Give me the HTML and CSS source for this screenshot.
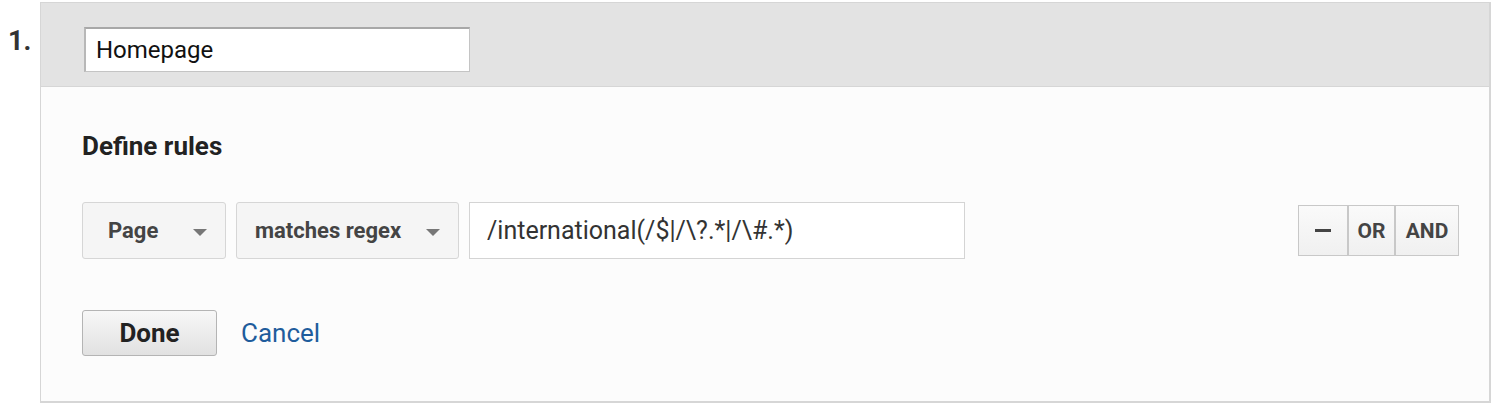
FILE: index.html
```html
<!DOCTYPE html>
<html>
<head>
    <title>Segment step</title>
    <link rel="stylesheet" href="styles.css">
</head>
<body>
    <div class="step">
        <div class="step-num">1.</div>
        <div class="step-box">
            <div class="step-head">
                <input class="name-input" type="text" value="Homepage">
            </div>
            <div class="step-body">
                <h3 class="rules-title">Define rules</h3>
                <div class="rule-row">
                    <div class="select sel-page">Page <span class="caret"></span></div>
                    <div class="select sel-match">matches regex <span class="caret"></span></div>
                    <input class="rule-input" type="text" value="/international(/$|/\?.*|/\#.*)">
                    <div class="btn-group">
                        <div class="seg seg-minus"><span class="minus"></span></div>
                        <div class="seg seg-or">OR</div>
                        <div class="seg seg-and">AND</div>
                    </div>
                </div>
                <div class="actions">
                    <button class="btn-done">Done</button>
                    <a class="cancel" href="#">Cancel</a>
                </div>
            </div>
        </div>
    </div>
</body>
</html>
```

FILE: styles.css
```css
body {
    margin: 0;
    font-family: Roboto, "Liberation Sans", Arial, sans-serif;
    background: #fff;
    color: #222;
}
.step {
    display: flex;
    padding-top: 2px;
}
.step-num {
    width: 32px;
    padding-left: 8px;
    padding-top: 23px;
    font-size: 27px;
    font-weight: bold;
    color: #333;
}
.step-box {
    width: 1448px;
    border: 1px solid #d6d6d6;
    border-width: 1px 2px 2px 1px;
    background: #fcfcfc;
}
.step-head {
    height: 84px;
    box-sizing: border-box;
    background: #e3e3e3;
    border-bottom: 1px solid #d6d6d6;
    padding: 24px 0 0 43px;
}
.name-input {
    width: 386px;
    height: 45px;
    box-sizing: border-box;
    border: 1px solid #c4c4c4;
    border-top: 2px solid #a8a8a8;
    border-left: 2px solid #b8b8b8;
    padding: 0 10px;
    font-family: inherit;
    font-size: 24px;
    color: #111;
    background: #fff;
    outline: none;
}
.step-body {
    padding: 0 0 0 41px;
}
.rules-title {
    margin: 0;
    padding-top: 44px;
    font-size: 26px;
    font-weight: bold;
    color: #222;
}
.rule-row {
    display: flex;
    align-items: center;
    margin-top: 41px;
}
.select {
    height: 57px;
    box-sizing: border-box;
    border: 1px solid #d6d6d6;
    border-radius: 3px;
    background: #f5f5f5;
    display: flex;
    align-items: center;
    font-size: 22px;
    font-weight: bold;
    color: #444;
    margin-right: 10px;
}
.sel-page {
    width: 144px;
    padding-left: 25px;
}
.sel-match {
    width: 223px;
    padding-left: 18px;
}
.caret {
    width: 0;
    height: 0;
    border-left: 7px solid transparent;
    border-right: 7px solid transparent;
    border-top: 7px solid #777;
    margin-left: auto;
    margin-right: 18px;
    margin-top: 4px;
}
.rule-input {
    width: 496px;
    height: 57px;
    box-sizing: border-box;
    border: 1px solid #d4d4d4;
    padding: 0 17px;
    font-family: inherit;
    font-size: 25px;
    color: #333;
    background: #fff;
    outline: none;
}
.btn-group {
    display: flex;
    margin-left: auto;
    margin-right: 30px;
    height: 49px;
    border: 1px solid #c8c8c8;
}
.seg {
    display: flex;
    align-items: center;
    justify-content: center;
    font-size: 21px;
    font-weight: bold;
    color: #444;
    background: linear-gradient(#fafafa, #f0f0f0);
}
.seg + .seg {
    border-left: 2px solid #c8c8c8;
}
.minus {
    width: 16px;
    height: 3px;
    background: #444;
}
.seg-minus {
    width: 48px;
}
.seg-or {
    width: 45px;
}
.seg-and {
    width: 62px;
}
.actions {
    display: flex;
    align-items: center;
    margin-top: 51px;
    padding-bottom: 45px;
}
.btn-done {
    width: 135px;
    height: 46px;
    border: 1px solid #b4b4b4;
    border-radius: 3px;
    background: linear-gradient(#f7f7f7, #e1e1e1);
    font-family: inherit;
    font-size: 26px;
    font-weight: bold;
    color: #222;
}
.cancel {
    margin-left: 24px;
    font-size: 26px;
    color: #1f5c9c;
    text-decoration: none;
}
```
